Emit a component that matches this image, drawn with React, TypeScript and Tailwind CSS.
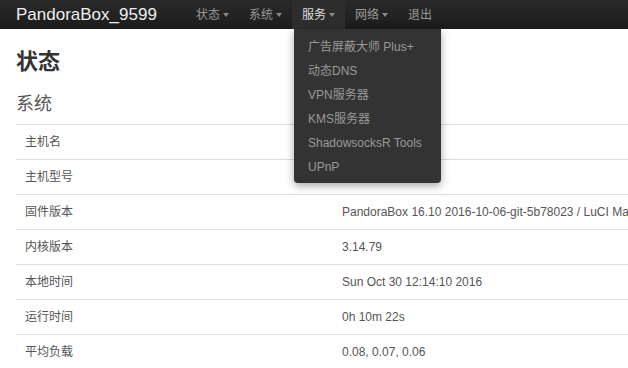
import React from "react";

const font = { fontFamily: '"Liberation Sans", "Noto Sans CJK SC", Arial, sans-serif' };

function Caret() {
  return (
    <span className="ml-[3px] inline-block h-0 w-0 border-l-[3px] border-r-[3px] border-t-[4px] border-l-transparent border-r-transparent border-t-[#8a8a8a] align-middle" />
  );
}

const navItems = [
  { label: "状态", caret: true },
  { label: "系统", caret: true },
  { label: "服务", caret: true, active: true },
  { label: "网络", caret: true },
  { label: "退出", caret: false },
];

const menu = ["广告屏蔽大师 Plus+", "动态DNS", "VPN服务器", "KMS服务器", "ShadowsocksR Tools", "UPnP"];

const rows: [string, string][] = [
  ["主机名", ""],
  ["主机型号", ""],
  ["固件版本", "PandoraBox 16.10 2016-10-06-git-5b78023 / LuCI Master (git-16.274.45917-ab4e4a3)"],
  ["内核版本", "3.14.79"],
  ["本地时间", "Sun Oct 30 12:14:10 2016"],
  ["运行时间", "0h 10m 22s"],
  ["平均负载", "0.08, 0.07, 0.06"],
];

export default function App() {
  return (
    <div className="relative h-[368px] w-[628px] overflow-hidden bg-white" style={font}>
      <div className="flex h-[29px] items-center bg-gradient-to-b from-[#2a2a2a] to-[#1b1b1b]">
        <div className="w-[186px] pl-[16px] text-[17px] leading-[29px] text-[#eeeeee]">PandoraBox_9599</div>
        {navItems.map((n) => (
          <div
            key={n.label}
            className={
              "flex h-[29px] items-center px-[10px] text-[12px] " +
              (n.active ? "bg-[#2d2d2d] text-[#dddddd]" : "text-[#9a9a9a]")
            }
          >
            <span>{n.label}</span>
            {n.caret && <Caret />}
          </div>
        ))}
      </div>

      <div className="absolute left-[294px] top-[29px] z-10 w-[147px] rounded-b-[4px] bg-[#333333] pb-[4px] pt-[6px] shadow-[0_3px_8px_rgba(0,0,0,0.35)]">
        {menu.map((m) => (
          <div key={m} className="whitespace-nowrap pl-[14px] text-[12px] leading-[24px] text-[#9a9a9a]">
            {m}
          </div>
        ))}
      </div>

      <div className="pl-[16px]">
        <h1 className="mt-[21px] text-[22px] font-bold leading-[24px] text-[#333333]">状态</h1>
        <h2 className="mt-[19px] text-[18px] leading-[22px] text-[#555555]">系统</h2>
        <div className="mt-[9px] w-[900px] border-t border-[#dddddd]">
          {rows.map(([k, v]) => (
            <div key={k} className="flex h-[35px] items-center border-b border-[#dddddd] text-[12px] text-[#555555]">
              <div className="w-[317px] pl-[9px]">{k}</div>
              <div className="whitespace-nowrap pl-[9px]">{v}</div>
            </div>
          ))}
        </div>
      </div>
    </div>
  );
}
